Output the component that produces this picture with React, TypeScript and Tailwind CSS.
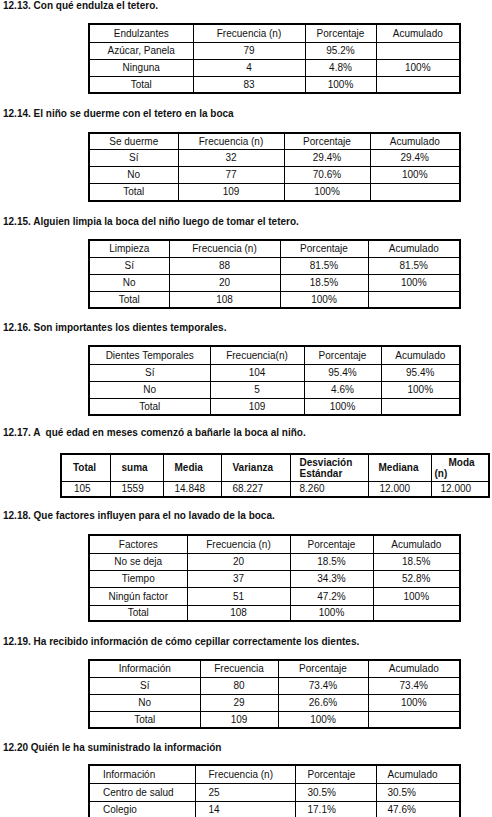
import React from "react";

type Cell = string | { t: React.ReactNode; cls?: string };

type TableSpec = {
  tableCls: string; // margin-left + total width
  cols: string[]; // column width classes
  rowH: string[]; // row height classes
  header: Cell[];
  rows: Cell[][];
  align?: "center" | "left";
  boldHeader?: boolean;
};

type Section = {
  title: string;
  titleMt: string;
  tableMt: string;
  table: TableSpec;
};

const sections: Section[] = [
  {
    title: "12.13. Con qué endulza el tetero.",
    titleMt: "mt-0",
    tableMt: "mt-[11px]",
    table: {
      tableCls: "ml-[85px] w-[371px]",
      cols: ["w-[104px]", "w-[112px]", "w-[71px]", "w-[84px]"],
      rowH: ["h-[18px]", "h-[17px]", "h-[17px]", "h-[17px]"],
      header: ["Endulzantes", "Frecuencia (n)", "Porcentaje", "Acumulado"],
      rows: [
        ["Azúcar, Panela", "79", "95.2%", ""],
        ["Ninguna", "4", "4.8%", "100%"],
        ["Total", "83", "100%", ""],
      ],
    },
  },
  {
    title: "12.14. El niño se duerme con el tetero en la boca",
    titleMt: "mt-[14px]",
    tableMt: "mt-[12px]",
    table: {
      tableCls: "ml-[85px] w-[371px]",
      cols: ["w-[89px]", "w-[106px]", "w-[86px]", "w-[90px]"],
      rowH: ["h-[16px]", "h-[17px]", "h-[17px]", "h-[18px]"],
      header: ["Se duerme", "Frecuencia (n)", "Porcentaje", "Acumulado"],
      rows: [
        ["Sí", "32", "29.4%", "29.4%"],
        ["No", "77", "70.6%", "100%"],
        ["Total", "109", "100%", ""],
      ],
    },
  },
  {
    title: "12.15. Alguien limpia la boca del niño luego de tomar el tetero.",
    titleMt: "mt-[14px]",
    tableMt: "mt-[11px]",
    table: {
      tableCls: "ml-[85px] w-[371px]",
      cols: ["w-[80px]", "w-[111px]", "w-[88px]", "w-[92px]"],
      rowH: ["h-[17px]", "h-[17px]", "h-[17px]", "h-[17px]"],
      header: ["Limpieza", "Frecuencia (n)", "Porcentaje", "Acumulado"],
      rows: [
        ["Sí", "88", "81.5%", "81.5%"],
        ["No", "20", "18.5%", "100%"],
        ["Total", "108", "100%", ""],
      ],
    },
  },
  {
    title: "12.16. Son importantes los dientes temporales.",
    titleMt: "mt-[13px]",
    tableMt: "mt-[11px]",
    table: {
      tableCls: "ml-[85px] w-[371px]",
      cols: ["w-[121px]", "w-[94px]", "w-[77px]", "w-[79px]"],
      rowH: ["h-[18px]", "h-[17px]", "h-[17px]", "h-[17px]"],
      header: ["Dientes Temporales", "Frecuencia(n)", "Porcentaje", "Acumulado"],
      rows: [
        ["Sí", "104", "95.4%", "95.4%"],
        ["No", "5", "4.6%", "100%"],
        ["Total", "109", "100%", ""],
      ],
    },
  },
  {
    title: "12.17. A  qué edad en meses comenzó a bañarle la boca al niño.",
    titleMt: "mt-[11px]",
    tableMt: "mt-[14px]",
    table: {
      tableCls: "ml-[57px] w-[428px]",
      cols: ["w-[49px]", "w-[53px]", "w-[58px]", "w-[69px]", "w-[78px]", "w-[63px]", "w-[58px]"],
      rowH: ["h-[27px]", "h-[16px]"],
      align: "left",
      boldHeader: true,
      header: [
        { t: "Total", cls: "pl-[11px]" },
        { t: "suma", cls: "pl-[11px]" },
        { t: "Media", cls: "pl-[11px]" },
        { t: "Varianza", cls: "pl-[11px]" },
        { t: "Desviación\nEstándar", cls: "pl-[9px]" },
        { t: "Mediana", cls: "pl-[10px]" },
        {
          t: (
            <>
              <span className="block pl-[14px]">Moda</span>
              <span className="block">(n)</span>
            </>
          ),
          cls: "pl-[3px]",
        },
      ],
      rows: [
        [
          { t: "105", cls: "pl-[12px]" },
          { t: "1559", cls: "pl-[11px]" },
          { t: "14.848", cls: "pl-[11px]" },
          { t: "68.227", cls: "pl-[11px]" },
          { t: "8.260", cls: "pl-[9px]" },
          { t: "12.000", cls: "pl-[11px]" },
          { t: "12.000", cls: "pl-[9px]" },
        ],
      ],
    },
  },
  {
    title: "12.18. Que factores influyen para el no lavado de la boca.",
    titleMt: "mt-[12px]",
    tableMt: "mt-[12px]",
    table: {
      tableCls: "ml-[85px] w-[371px]",
      cols: ["w-[98px]", "w-[103px]", "w-[83px]", "w-[87px]"],
      rowH: ["h-[18px]", "h-[17px]", "h-[17px]", "h-[18px]", "h-[16px]"],
      header: ["Factores", "Frecuencia (n)", "Porcentaje", "Acumulado"],
      rows: [
        ["No se deja", "20", "18.5%", "18.5%"],
        ["Tiempo", "37", "34.3%", "52.8%"],
        ["Ningún factor", "51", "47.2%", "100%"],
        ["Total", "108", "100%", ""],
      ],
    },
  },
  {
    title: "12.19. Ha recibido información de cómo cepillar correctamente los dientes.",
    titleMt: "mt-[14px]",
    tableMt: "mt-[11px]",
    table: {
      tableCls: "ml-[85px] w-[371px]",
      cols: ["w-[111px]", "w-[78px]", "w-[90px]", "w-[92px]"],
      rowH: ["h-[17px]", "h-[17px]", "h-[17px]", "h-[17px]"],
      header: ["Información", "Frecuencia", "Porcentaje", "Acumulado"],
      rows: [
        ["Sí", "80", "73.4%", "73.4%"],
        ["No", "29", "26.6%", "100%"],
        ["Total", "109", "100%", ""],
      ],
    },
  },
  {
    title: "12.20 Quién le ha suministrado la información",
    titleMt: "mt-[13px]",
    tableMt: "mt-[10px]",
    table: {
      tableCls: "ml-[85px] w-[371px]",
      cols: ["w-[106px]", "w-[100px]", "w-[81px]", "w-[84px]"],
      rowH: ["h-[18px]", "h-[18px]", "h-[18px]"],
      align: "left",
      header: [
        { t: "Información", cls: "pl-[13px]" },
        { t: "Frecuencia (n)", cls: "pl-[13px]" },
        { t: "Porcentaje", cls: "pl-[12px]" },
        { t: "Acumulado", cls: "pl-[11px]" },
      ],
      rows: [
        [
          { t: "Centro de salud", cls: "pl-[13px]" },
          { t: "25", cls: "pl-[13px]" },
          { t: "30.5%", cls: "pl-[12px]" },
          { t: "30.5%", cls: "pl-[11px]" },
        ],
        [
          { t: "Colegio", cls: "pl-[13px]" },
          { t: "14", cls: "pl-[13px]" },
          { t: "17.1%", cls: "pl-[12px]" },
          { t: "47.6%", cls: "pl-[11px]" },
        ],
      ],
    },
  },
];

function cellText(c: Cell) {
  return typeof c === "string" ? c : c.t;
}

function cellCls(c: Cell) {
  return typeof c === "string" ? "" : c.cls ?? "";
}

function DataTable({ spec }: { spec: TableSpec }) {
  const alignCls = spec.align === "left" ? "text-left" : "text-center";

  return (
    <table className={`${spec.tableCls} table-fixed border-collapse border-2 border-black`}>
      <colgroup>
        {spec.cols.map((w, i) => (
          <col key={i} className={w} />
        ))}
      </colgroup>
      <tbody>
        <tr className={spec.rowH[0]}>
          {spec.header.map((c, i) => (
            <td
              key={i}
              className={`border border-black p-0 align-middle whitespace-pre-line leading-[11px] ${alignCls} ${cellCls(c)} ${
                spec.boldHeader ? "font-bold" : ""
              }`}
            >
              {cellText(c)}
            </td>
          ))}
        </tr>
        {spec.rows.map((r, ri) => (
          <tr key={ri} className={spec.rowH[ri + 1]}>
            {r.map((c, ci) => (
              <td
                key={ci}
                className={`border border-black p-0 align-middle leading-[11px] ${alignCls} ${cellCls(c)}`}
              >
                {cellText(c)}
              </td>
            ))}
          </tr>
        ))}
      </tbody>
    </table>
  );
}

export default function App() {
  return (
    <div className="w-[492px] min-h-[817px] bg-white pl-[3px] font-['Liberation_Sans',Arial,sans-serif] text-[10px] text-[#111]">
      {sections.map((s, i) => (
        <section key={i} className={s.titleMt}>
          <div className="font-bold leading-[12px] whitespace-pre">{s.title}</div>
          <div className={s.tableMt}>
            <DataTable spec={s.table} />
          </div>
        </section>
      ))}
    </div>
  );
}
